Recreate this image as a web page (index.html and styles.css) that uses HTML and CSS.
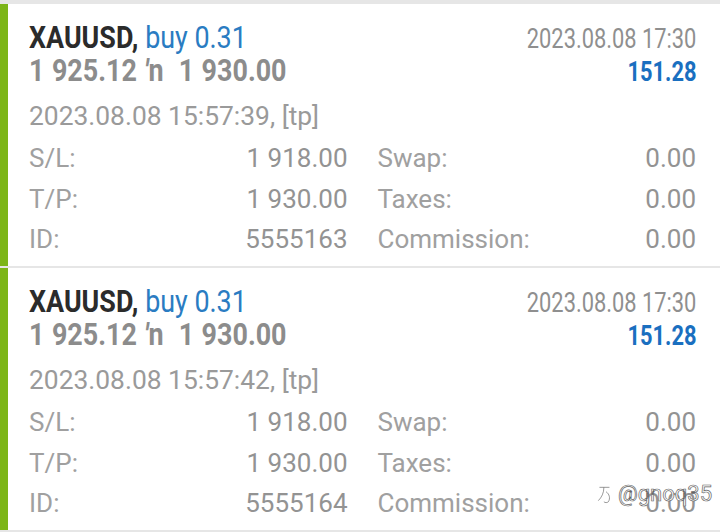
FILE: index.html
```html
<!DOCTYPE html>
<html lang="en">
<head>
    <meta charset="UTF-8">
    <meta name="viewport" content="width=device-width, initial-scale=1.0">
    <title>History - XAUUSD</title>
    <link rel="stylesheet" href="styles.css">
</head>
<body>
    <div class="list">
        <div class="trade">
            <div class="trade-inner">
                <div class="trade-head">
                    <div class="head-left">
                        <div class="line"><span class="cond"><b class="symbol">XAUUSD,</b> <span class="side">buy 0.31</span></span></div>
                        <div class="line"><span class="cond prices">1 925.12 <i>′</i>n&nbsp; 1 930.00</span></div>
                    </div>
                    <div class="head-right">
                        <div class="line"><span class="cond close-time">2023.08.08 17:30</span></div>
                        <div class="line"><span class="cond profit">151.28</span></div>
                    </div>
                </div>
                <div class="open-time">2023.08.08 15:57:39, [tp]</div>
                <div class="details">
                    <div class="field"><span>S/L:</span><span class="val">1 918.00</span></div>
                    <div class="field"><span>Swap:</span><span class="val">0.00</span></div>
                    <div class="field"><span>T/P:</span><span class="val">1 930.00</span></div>
                    <div class="field"><span>Taxes:</span><span class="val">0.00</span></div>
                    <div class="field"><span>ID:</span><span class="val">5555163</span></div>
                    <div class="field"><span>Commission:</span><span class="val">0.00</span></div>
                </div>
            </div>
        </div>

        <div class="trade">
            <div class="trade-inner">
                <div class="trade-head">
                    <div class="head-left">
                        <div class="line"><span class="cond"><b class="symbol">XAUUSD,</b> <span class="side">buy 0.31</span></span></div>
                        <div class="line"><span class="cond prices">1 925.12 <i>′</i>n&nbsp; 1 930.00</span></div>
                    </div>
                    <div class="head-right">
                        <div class="line"><span class="cond close-time">2023.08.08 17:30</span></div>
                        <div class="line"><span class="cond profit">151.28</span></div>
                    </div>
                </div>
                <div class="open-time">2023.08.08 15:57:42, [tp]</div>
                <div class="details">
                    <div class="field"><span>S/L:</span><span class="val">1 918.00</span></div>
                    <div class="field"><span>Swap:</span><span class="val">0.00</span></div>
                    <div class="field"><span>T/P:</span><span class="val">1 930.00</span></div>
                    <div class="field"><span>Taxes:</span><span class="val">0.00</span></div>
                    <div class="field"><span>ID:</span><span class="val">5555164</span></div>
                    <div class="field"><span>Commission:</span><span class="val">0.00</span></div>
                </div>
            </div>
        </div>

        <div class="trade-next"></div>
    </div>

    <div class="watermark">
        <svg width="18" height="20" viewBox="0 0 16 18"><path d="M3 3h9M7 3c0 5-2 9-5 12M9 7c3 2 4 6 2 9-1 1-3 1-4 0" fill="none" stroke="#fff" stroke-width="1.8"/><path d="M3 3h9M7 3c0 5-2 9-5 12M9 7c3 2 4 6 2 9-1 1-3 1-4 0" fill="none" stroke="#666" stroke-width="0.6"/></svg>
        <span>@gnoq35</span>
    </div>
</body>
</html>
```

FILE: styles.css
```css
* {
    margin: 0;
    padding: 0;
    box-sizing: border-box;
}

body {
    font-family: Roboto, 'Liberation Sans', sans-serif;
    background: white;
    overflow: hidden;
}

.list {
    border-top: 4px solid #e6e6e6;
}

.trade {
    border-bottom: 2px solid #e6e6e6;
}

.trade-inner {
    height: 262px;
    border-left: 8px solid #7cb518;
    padding: 17px 24px 3px 21px;
}

.trade-next {
    height: 3px;
    border-left: 8px solid #7cb518;
}

.trade-head {
    display: flex;
    justify-content: space-between;
}

.line {
    height: 33px;
    line-height: 33px;
    white-space: nowrap;
}

.cond {
    display: inline-block;
    transform: scaleX(0.84);
    transform-origin: left center;
}

.head-left {
    font-size: 32px;
}

.symbol {
    color: #2b2b2b;
    font-weight: 700;
}

.side {
    color: #2a7cc2;
}

.prices {
    color: #8c8c8c;
    font-weight: 700;
    word-spacing: 1px;
}

.prices i {
    font-style: italic;
}

.head-right {
    font-size: 28px;
    text-align: right;
    padding-top: 1px;
}

.head-right .cond {
    transform: scaleX(0.78);
    transform-origin: right center;
}

.close-time {
    color: #8f8f8f;
}

.profit {
    color: #1a6fc0;
    font-weight: 700;
}

.open-time {
    margin-top: 8px;
    font-size: 26.4px;
    line-height: 40px;
    color: #9a9a9a;
}

.details {
    margin-top: 2px;
    display: grid;
    grid-template-columns: 1fr 1fr;
    column-gap: 30px;
    font-size: 26px;
    line-height: 40.5px;
    color: #a0a0a0;
}

.field {
    display: flex;
    justify-content: space-between;
}

.field .val {
    color: #939393;
}

.watermark {
    position: absolute;
    left: 596px;
    top: 481px;
    display: flex;
    align-items: center;
    gap: 4px;
    font-size: 22px;
    color: white;
    -webkit-text-stroke: 0.7px #666;
}
```
